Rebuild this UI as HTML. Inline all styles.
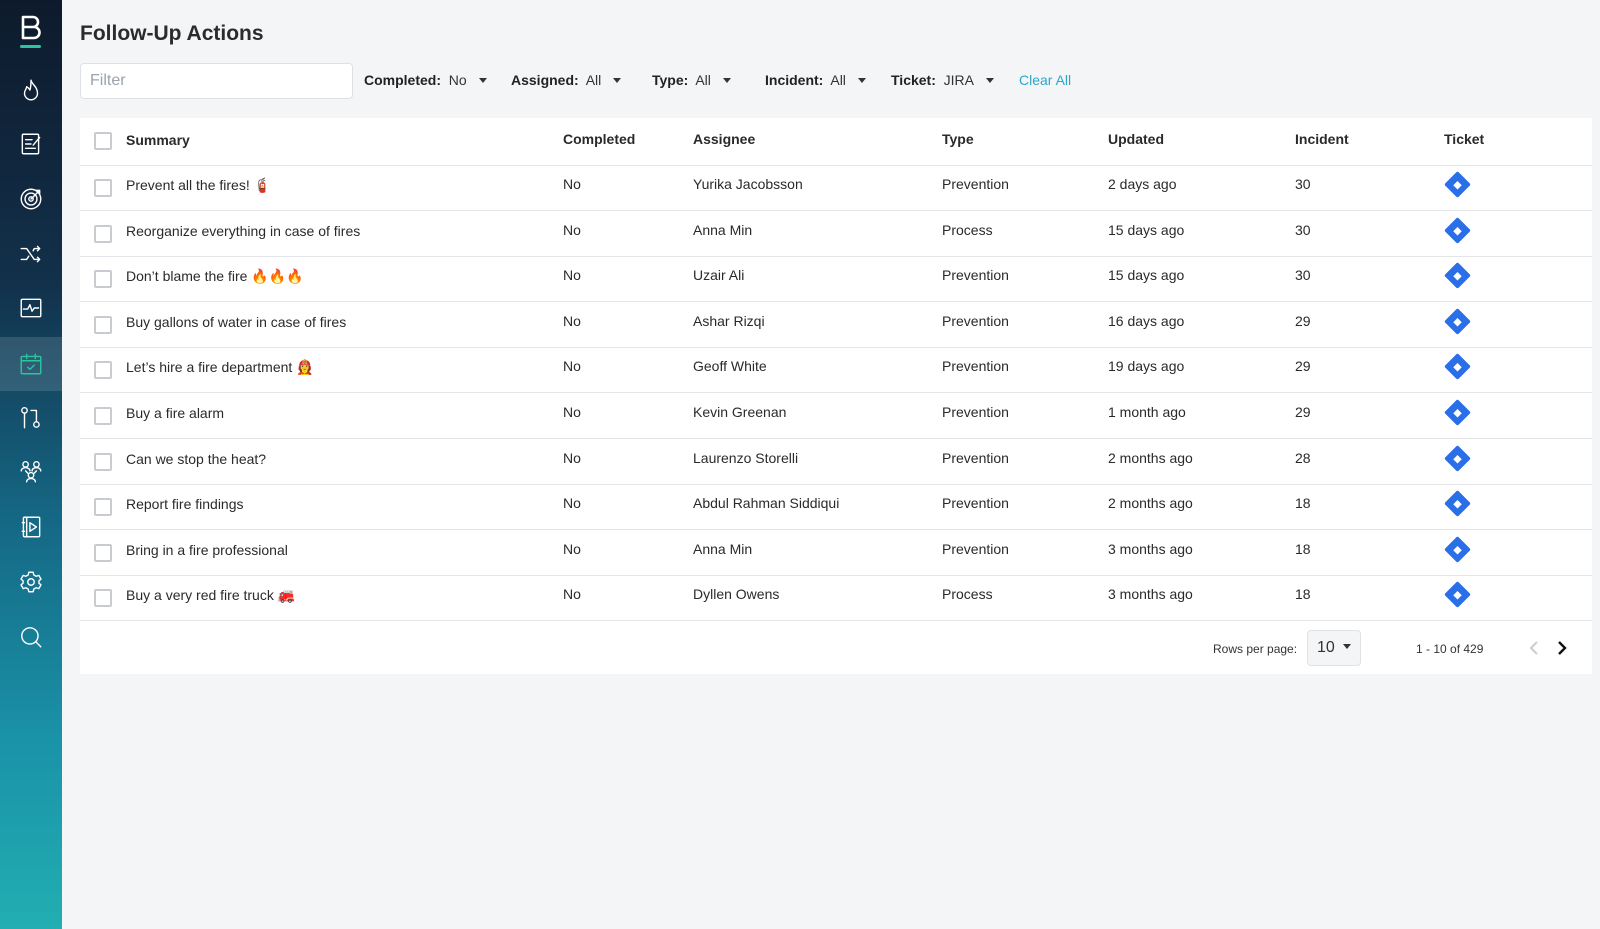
<!DOCTYPE html>
<html><head><meta charset="utf-8"><style>
*{box-sizing:border-box;margin:0;padding:0}
body{width:1600px;height:929px;background:#f4f5f7;font-family:"Liberation Sans","Noto Sans CJK JP",sans-serif;color:#222;position:relative;overflow:hidden;font-size:14px}
.sb{position:absolute;left:0;top:0;width:62px;height:929px;background:linear-gradient(180deg,#0e1a2c 0%,#12304a 30%,#156683 55%,#1a93a8 80%,#22aeb2 100%)}
.sb .act{position:absolute;left:0;top:337px;width:62px;height:54px;background:rgba(255,255,255,.13)}
.sb svg{position:absolute;left:18px;width:26px;height:26px;fill:none;stroke:#fff;stroke-width:1.3;stroke-linecap:round;stroke-linejoin:round}
h1{position:absolute;left:80px;top:22px;font-size:21px;font-weight:bold;color:#2b2b2b}
.filter{position:absolute;left:80px;top:63px;width:273px;height:36px;background:#fff;border:1px solid #dde0e4;border-radius:4px;padding:8px 9px;color:#9aa3ad;font-size:16px}
.f{position:absolute;top:72px;font-size:14px;color:#333}
.f b{color:#222}
.f i{display:inline-block;width:0;height:0;border-left:4px solid transparent;border-right:4px solid transparent;border-top:5px solid #333;margin-left:12px;vertical-align:2px}
.tbl{position:absolute;left:80px;top:118px;width:1512px;height:556px;background:#fff}
.line{position:absolute;left:0;width:1512px;height:1px;background:#e3e5e8}
.t{position:absolute;font-size:14px;color:#2a2a2a;white-space:nowrap}
.h{font-weight:bold}
.cb{position:absolute;left:14px;width:18px;height:18px;border:2px solid #c8ccd1;border-radius:2px}
.jira{position:absolute;width:19px;height:19px;background:#2a6ee8;transform:rotate(45deg);border-radius:2px}
.jira:after{content:"";position:absolute;left:6.5px;top:6.5px;width:6px;height:6px;background:#fff}
</style></head><body>
<div class="sb">
<svg style="top:14px;left:18px;width:26px;height:30px;stroke-width:2.6" viewBox="0 0 26 30"><path d="M5 3h10a5 5 0 0 1 0 10H5zM5 13h11a5.5 5.5 0 0 1 0 11H5z"/></svg>
<div style="position:absolute;left:20px;top:45px;width:21px;height:3px;background:#2ec4a0;border-radius:2px"></div>
<div class="act"></div>
<svg style="top:77px" viewBox="0 0 24 24"><path d="M12 3c1 4 6 6 6 12a6 6 0 0 1-12 0c0-3 2-4 2-6 2 1 3 3 3 3 1-3 1-6 1-9z"/></svg>
<svg style="top:131px" viewBox="0 0 24 24"><rect x="4" y="3" width="15" height="18" rx="1"/><path d="M7 8h6M7 12h5M7 16h9M14 13l6-7"/></svg>
<svg style="top:186px" viewBox="0 0 24 24"><circle cx="12" cy="12" r="9"/><circle cx="12" cy="12" r="5.5"/><circle cx="12" cy="12" r="2"/><path d="M12 12l8-8M17 4h3v3"/></svg>
<svg style="top:241px" viewBox="0 0 24 24"><path d="M3 7h5l7 10h5M3 17h5l2-3M14 9l1-2h5M18 5l2 2-2 2M18 15l2 2-2 2"/></svg>
<svg style="top:295px" viewBox="0 0 24 24"><rect x="3" y="4" width="18" height="16" rx="1"/><path d="M5 13h4l2-4 2 6 2-3h4"/></svg>
<svg style="top:351px;stroke:#2ec4a0" viewBox="0 0 24 24"><rect x="3" y="5" width="18" height="16" rx="1"/><path d="M3 9h18M8 3v4M16 3v4M9 15l2 2 4-4"/></svg>
<svg style="top:405px" viewBox="0 0 24 24"><circle cx="6" cy="5" r="2.5"/><path d="M6 8v13M12 5h5v10"/><circle cx="17" cy="18" r="2.5"/></svg>
<svg style="top:459px" viewBox="0 0 24 24"><circle cx="7" cy="5" r="2.5"/><circle cx="17" cy="5" r="2.5"/><circle cx="12" cy="15" r="2.5"/><path d="M3 11c0-2 2-3 4-3s4 1 4 3M13 11c0-2 2-3 4-3s4 1 4 3M8 21c0-2 2-3 4-3s4 1 4 3M9 13l-2-2M15 13l2-2"/></svg>
<svg style="top:514px" viewBox="0 0 24 24"><rect x="5" y="3" width="15" height="18" rx="1"/><path d="M8 3v18M4 8h2M4 16h2M11 8l6 4-6 4z"/></svg>
<svg style="top:569px" viewBox="0 0 24 24"><circle cx="12" cy="12" r="3"/><path d="M10 3h4l.6 2.5 2.2 1.2 2.4-.8 2 3.4-1.9 1.7v2l1.9 1.7-2 3.4-2.4-.8-2.2 1.2L14 21h-4l-.6-2.5-2.2-1.2-2.4.8-2-3.4 1.9-1.7v-2L2.8 9.3l2-3.4 2.4.8 2.2-1.2z"/></svg>
<svg style="top:624px" viewBox="0 0 24 24"><circle cx="11" cy="11" r="7.5"/><path d="M16.5 16.5L21 21"/></svg>
</div>
<h1>Follow-Up Actions</h1>
<div class="filter">Filter</div>
<div class="f" style="left:364px"><b>Completed:</b>&nbsp; No<i></i></div>
<div class="f" style="left:511px"><b>Assigned:</b>&nbsp; All<i></i></div>
<div class="f" style="left:652px"><b>Type:</b>&nbsp; All<i></i></div>
<div class="f" style="left:765px"><b>Incident:</b>&nbsp; All<i></i></div>
<div class="f" style="left:891px"><b>Ticket:</b>&nbsp; JIRA<i></i></div>
<div class="f" style="left:1019px;color:#2aa8c9">Clear All</div>
<div class="tbl">
<div class="cb" style="top:14px"></div>
<div class="t h" style="left:46px;top:14px">Summary</div>
<div class="t h" style="left:483px;top:13px">Completed</div>
<div class="t h" style="left:613px;top:13px">Assignee</div>
<div class="t h" style="left:862px;top:13px">Type</div>
<div class="t h" style="left:1028px;top:13px">Updated</div>
<div class="t h" style="left:1215px;top:13px">Incident</div>
<div class="t h" style="left:1364px;top:13px">Ticket</div>
<div class="line" style="top:47px"></div>
<div id="rows"></div>
</div>
<div style="position:absolute;left:1213px;top:642px;font-size:12px;color:#333">Rows per page:</div>
<div style="position:absolute;left:1307px;top:630px;width:54px;height:36px;background:#f4f5f7;border:1px solid #e0e2e5;border-radius:4px;padding:8px 9px;font-size:16px;color:#333">10<span style="display:inline-block;border-left:4px solid transparent;border-right:4px solid transparent;border-top:5px solid #333;margin-left:8px;vertical-align:3px"></span></div>
<div style="position:absolute;left:1416px;top:642px;font-size:12px;color:#333">1 - 10 of 429</div>
<svg style="position:absolute;left:1528px;top:640px" width="12" height="16" viewBox="0 0 12 16"><path d="M9 2L3 8l6 6" fill="none" stroke="#ccc" stroke-width="2"/></svg>
<svg style="position:absolute;left:1556px;top:640px" width="12" height="16" viewBox="0 0 12 16"><path d="M3 2l6 6-6 6" fill="none" stroke="#111" stroke-width="2.4"/></svg>
<script>
var d=[["Prevent all the fires! 🧯","Yurika Jacobsson","Prevention","2 days ago","30"],
["Reorganize everything in case of fires","Anna Min","Process","15 days ago","30"],
["Don’t blame the fire 🔥🔥🔥","Uzair Ali","Prevention","15 days ago","30"],
["Buy gallons of water in case of fires","Ashar Rizqi","Prevention","16 days ago","29"],
["Let’s hire a fire department 👩‍🚒","Geoff White","Prevention","19 days ago","29"],
["Buy a fire alarm","Kevin Greenan","Prevention","1 month ago","29"],
["Can we stop the heat?","Laurenzo Storelli","Prevention","2 months ago","28"],
["Report fire findings","Abdul Rahman Siddiqui","Prevention","2 months ago","18"],
["Bring in a fire professional","Anna Min","Prevention","3 months ago","18"],
["Buy a very red fire truck 🚒","Dyllen Owens","Process","3 months ago","18"]];
var h="";
for(var i=0;i<10;i++){var y=47+i*45.6;var r=d[i];
h+='<div class="cb" style="top:'+(y+14)+'px"></div><div class="t" style="left:46px;top:'+(y+12)+'px">'+r[0]+'</div><div class="t" style="left:483px;top:'+(y+11)+'px">No</div><div class="t" style="left:613px;top:'+(y+11)+'px">'+r[1]+'</div><div class="t" style="left:862px;top:'+(y+11)+'px">'+r[2]+'</div><div class="t" style="left:1028px;top:'+(y+11)+'px">'+r[3]+'</div><div class="t" style="left:1215px;top:'+(y+11)+'px">'+r[4]+'</div><div class="jira" style="left:1368px;top:'+(y+10)+'px"></div><div class="line" style="top:'+(y+45)+'px"></div>';}
document.getElementById("rows").innerHTML=h;
</script>
</body></html>
